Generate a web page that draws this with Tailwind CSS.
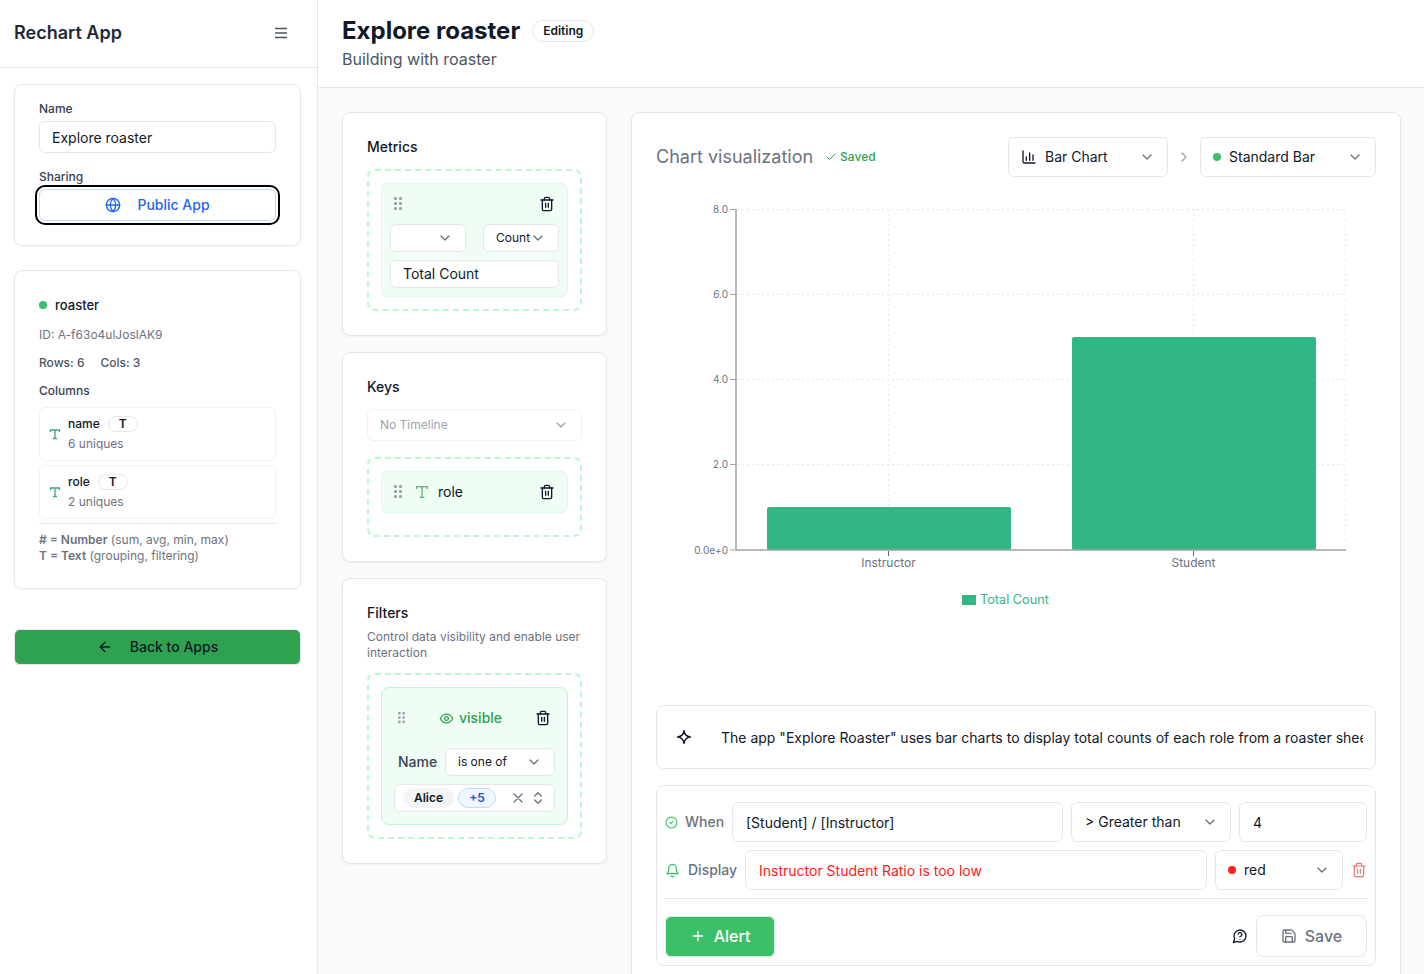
<!DOCTYPE html>
<html lang="en">
<head>
    <meta charset="utf-8">
    <script src="https://cdn.jsdelivr.net/npm/@tailwindcss/browser@4"></script>
</head>
<body class="font-[Inter,sans-serif] text-[#111827] bg-white">
<div class="h-[974px] w-[1424px] overflow-hidden flex">
    <!-- sidebar -->
    <aside class="w-[318px] shrink-0 border-r border-[#e5e7eb] bg-white">
        <div class="h-[68px] border-b border-[#e5e7eb] pl-[14px] pr-[28px] pb-[2px] flex items-center justify-between">
            <span class="text-[18px] font-semibold text-[#1f2937]">Rechart App</span>
            <svg class="w-4 h-4 text-[#4b5563]" viewBox="0 0 16 16" fill="none" stroke="currentColor" stroke-width="1.6"><path d="M2 3.500h12M2 8h12M2 12.500h12"/></svg>
        </div>
        <div class="pl-[14px] pr-[16px] pt-[16px]">
            <div class="h-[162px] rounded-lg border border-[#e5e7eb] shadow-xs px-6 pt-[16px]">
                <div class="text-xs leading-4 font-medium text-[#374151]">Name</div>
                <div class="mt-[4px] h-8 border border-[#e5e7eb] rounded-md pl-3 pt-px flex items-center text-sm text-[#111827]">Explore roaster</div>
                <div class="mt-[16px] text-xs leading-4 font-medium text-[#374151]">Sharing</div>
                <div class="mt-[4px] h-8 rounded-md border border-[#bfdbfe] outline-2 outline-offset-2 outline-black flex items-center justify-center gap-[16px] text-sm font-medium text-[#2563eb]">
                    <svg class="w-4 h-4" viewBox="0 0 24 24" fill="none" stroke="currentColor" stroke-width="2" stroke-linecap="round" stroke-linejoin="round"><circle cx="12" cy="12" r="10"/><path d="M12 2a14.500 14.500 0 0 0 0 20 14.500 14.500 0 0 0 0-20"/><path d="M2 12h20"/></svg>
                    <span>Public App</span>
                </div>
            </div>
            <div class="mt-6 h-[319px] rounded-lg border border-[#e5e7eb] shadow-xs px-6 pt-[26px]">
                <div class="flex items-center gap-2 text-[13px] leading-4 font-medium text-[#111827]">
                    <span class="w-2 h-2 rounded-full bg-[#3bbf67]"></span>roaster
                </div>
                <div class="mt-[14px] text-xs leading-[16px] text-[#6b7280]">ID: A-f63o4ulJoslAK9</div>
                <div class="mt-[12px] text-xs leading-[16px] font-medium text-[#4b5563] flex gap-4"><span>Rows: 6</span><span>Cols: 3</span></div>
                <div class="mt-[12px] text-xs leading-[16px] font-medium text-[#374151]">Columns</div>
                <div class="mt-[8px] flex flex-col gap-[4px]">
                    <div class="h-[54px] rounded-md border border-[#f0f1f3] flex items-center pl-[9px] gap-[7px]">
                        <svg class="w-[12px] h-[12px] text-[#3fa878]" viewBox="0 0 24 24" fill="none" stroke="currentColor" stroke-width="2.600"><path d="M3 8V4h18v4M12 4v17M8 21h8"/></svg>
                        <div>
                            <div class="flex items-center gap-2 text-xs leading-4 font-medium text-[#111827]">name<span class="w-[30px] h-4 rounded-full border border-[#e5e7eb] flex items-center justify-center font-semibold">T</span></div>
                            <div class="mt-[4px] text-xs leading-4 text-[#6b7280]">6 uniques</div>
                        </div>
                    </div>
                    <div class="h-[54px] rounded-md border border-[#f0f1f3] flex items-center pl-[9px] gap-[7px]">
                        <svg class="w-[12px] h-[12px] text-[#3fa878]" viewBox="0 0 24 24" fill="none" stroke="currentColor" stroke-width="2.600"><path d="M3 8V4h18v4M12 4v17M8 21h8"/></svg>
                        <div>
                            <div class="flex items-center gap-2 text-xs leading-4 font-medium text-[#111827]">role<span class="w-[30px] h-4 rounded-full border border-[#e5e7eb] flex items-center justify-center font-semibold">T</span></div>
                            <div class="mt-[4px] text-xs leading-4 text-[#6b7280]">2 uniques</div>
                        </div>
                    </div>
                </div>
                <div class="mt-[4px] border-t border-[#e5e7eb] pt-[8px] text-xs leading-[16px] text-[#6b7280]">
                    <div><b class="font-semibold"># = Number</b> (sum, avg, min, max)</div>
                    <div><b class="font-semibold">T = Text</b> (grouping, filtering)</div>
                </div>
            </div>
            <div class="mt-[40px] h-[36px] rounded-md bg-[#2ea24f] border border-[#e5e7eb] flex items-center justify-center gap-[17px] text-sm font-medium text-[#111827]">
                <svg class="w-4 h-4" viewBox="0 0 24 24" fill="none" stroke="currentColor" stroke-width="2" stroke-linecap="round" stroke-linejoin="round"><path d="m12 19-7-7 7-7"/><path d="M19 12H5"/></svg>
                <span>Back to Apps</span>
            </div>
        </div>
    </aside>

    <main class="flex-1 min-w-0 bg-[#f9fafb]">
        <header class="h-[88px] bg-white border-b border-[#e5e7eb] pl-6 pt-[15px]">
            <div class="flex items-center gap-3">
                <h1 class="text-2xl leading-8 font-bold text-[#111827]">Explore roaster</h1>
                <span class="h-[22px] px-[10px] rounded-full border border-[#e5e7eb] flex items-center text-xs font-semibold text-[#111827]">Editing</span>
            </div>
            <div class="text-base leading-6 text-[#4b5563]">Building with roaster</div>
        </header>

        <div class="flex gap-6 pl-6 pt-6">
            <div class="w-[265px] shrink-0 flex flex-col gap-4">
                <!-- metrics -->
                <section class="h-[224px] bg-white rounded-lg border border-[#e5e7eb] shadow-xs pl-6 pr-6 pt-[26px]">
                    <h3 class="text-sm leading-4 font-medium text-[#111827]">Metrics</h3>
                    <div class="mt-[14px] h-[142px] rounded-lg border-2 border-dashed border-[#bbf7d0] p-[12px]">
                        <div class="h-[114px] rounded-md bg-[#f0fdf4] border border-[#dcfce7] pl-2 pr-2 pt-[12px]">
                            <div class="flex items-center justify-between pl-[4px] pr-[4px]">
                                <svg class="w-[8px] h-[14px] text-[#9ca3af]" viewBox="0 0 8 14" fill="currentColor"><rect x="0" y="0" width="3" height="3" rx="1"/><rect x="5" y="0" width="3" height="3" rx="1"/><rect x="0" y="5" width="3" height="3" rx="1"/><rect x="5" y="5" width="3" height="3" rx="1"/><rect x="0" y="10" width="3" height="3" rx="1"/><rect x="5" y="10" width="3" height="3" rx="1"/></svg>
                                <svg class="w-4 h-4 text-[#111827]" viewBox="0 0 24 24" fill="none" stroke="currentColor" stroke-width="2" stroke-linecap="round" stroke-linejoin="round"><path d="M3 6h18"/><path d="M19 6v14c0 1-1 2-2 2H7c-1 0-2-1-2-2V6"/><path d="M8 6V4c0-1 1-2 2-2h4c1 0 2 1 2 2v2"/><path d="M10 11v6M14 11v6"/></svg>
                            </div>
                            <div class="mt-[12px] flex justify-between">
                                <div class="w-[76px] h-[28px] bg-white rounded-md border border-[#e5e7eb] flex items-center justify-end pr-[12px]">
                                    <svg class="w-4 h-4 text-[#6b7280]" viewBox="0 0 24 24" fill="none" stroke="currentColor" stroke-width="2" stroke-linecap="round" stroke-linejoin="round"><path d="m6 9 6 6 6-6"/></svg>
                                </div>
                                <div class="w-[76px] h-[28px] bg-white rounded-md border border-[#e5e7eb] flex items-center pl-[12px] text-xs text-[#111827]">Count
                                    <svg class="w-4 h-4 text-[#6b7280]" viewBox="0 0 24 24" fill="none" stroke="currentColor" stroke-width="2" stroke-linecap="round" stroke-linejoin="round"><path d="m6 9 6 6 6-6"/></svg>
                                </div>
                            </div>
                            <div class="mt-[8px] h-[28px] bg-white rounded-md border border-[#e5e7eb] pl-3 flex items-center text-sm text-[#111827]">Total Count</div>
                        </div>
                    </div>
                </section>

                <!-- keys -->
                <section class="h-[210px] bg-white rounded-lg border border-[#e5e7eb] shadow-xs px-6 pt-[26px]">
                    <h3 class="text-sm leading-4 font-medium text-[#111827]">Keys</h3>
                    <div class="mt-[14px] h-8 rounded-md border border-[#f0f1f3] pl-3 pr-[12px] flex items-center justify-between text-xs text-[#9ca3af]">No Timeline
                        <svg class="w-4 h-4 text-[#9ca3af]" viewBox="0 0 24 24" fill="none" stroke="currentColor" stroke-width="2" stroke-linecap="round" stroke-linejoin="round"><path d="m6 9 6 6 6-6"/></svg>
                    </div>
                    <div class="mt-4 h-[80px] rounded-lg border-2 border-dashed border-[#bbf7d0] p-[12px]">
                        <div class="h-[42px] rounded-md bg-[#f0fdf4] border border-[#dcfce7] pl-[12px] pr-[12px] flex items-center">
                            <svg class="w-[8px] h-[14px] text-[#9ca3af]" viewBox="0 0 8 14" fill="currentColor"><rect x="0" y="0" width="3" height="3" rx="1"/><rect x="5" y="0" width="3" height="3" rx="1"/><rect x="0" y="5" width="3" height="3" rx="1"/><rect x="5" y="5" width="3" height="3" rx="1"/><rect x="0" y="10" width="3" height="3" rx="1"/><rect x="5" y="10" width="3" height="3" rx="1"/></svg>
                            <svg class="ml-[13px] w-[14px] h-[14px] text-[#2ea24f]" viewBox="0 0 24 24" fill="none" stroke="currentColor" stroke-width="1.800"><path d="M3 7V3h18v4M12 3v18M8 21h8"/></svg>
                            <span class="ml-[9px] text-sm text-[#111827]">role</span>
                            <svg class="ml-auto w-4 h-4 text-[#111827]" viewBox="0 0 24 24" fill="none" stroke="currentColor" stroke-width="2" stroke-linecap="round" stroke-linejoin="round"><path d="M3 6h18"/><path d="M19 6v14c0 1-1 2-2 2H7c-1 0-2-1-2-2V6"/><path d="M8 6V4c0-1 1-2 2-2h4c1 0 2 1 2 2v2"/><path d="M10 11v6M14 11v6"/></svg>
                        </div>
                    </div>
                </section>

                <!-- filters -->
                <section class="h-[286px] bg-white rounded-lg border border-[#e5e7eb] shadow-xs px-6 pt-[26px]">
                    <h3 class="text-sm leading-4 font-medium text-[#111827]">Filters</h3>
                    <p class="mt-[8px] text-xs leading-4 text-[#6b7280]">Control data visibility and enable user interaction</p>
                    <div class="mt-[12px] h-[166px] rounded-lg border-2 border-dashed border-[#bbf7d0] p-[12px]">
                        <div class="h-[138px] rounded-lg bg-[#f0fdf4] border border-[#bbf7d0] pl-[12px] pr-[12px] pt-[22px]">
                            <div class="flex items-center h-4 pl-[4px] pr-[4px]">
                                <svg class="w-[7px] h-[12px] text-[#9ca3af]" viewBox="0 0 8 14" fill="currentColor"><rect x="0" y="0" width="3" height="3" rx="1"/><rect x="5" y="0" width="3" height="3" rx="1"/><rect x="0" y="5" width="3" height="3" rx="1"/><rect x="5" y="5" width="3" height="3" rx="1"/><rect x="0" y="10" width="3" height="3" rx="1"/><rect x="5" y="10" width="3" height="3" rx="1"/></svg>
                                <svg class="ml-[34px] w-[15px] h-[15px] text-[#2ea24f]" viewBox="0 0 24 24" fill="none" stroke="currentColor" stroke-width="2" stroke-linecap="round" stroke-linejoin="round"><path d="M2 12s3.500-7 10-7 10 7 10 7-3.500 7-10 7-10-7-10-7"/><circle cx="12" cy="12" r="3"/></svg>
                                <span class="ml-[5px] text-sm font-medium text-[#2ea24f]">visible</span>
                                <svg class="ml-auto w-4 h-4 text-[#111827]" viewBox="0 0 24 24" fill="none" stroke="currentColor" stroke-width="2" stroke-linecap="round" stroke-linejoin="round"><path d="M3 6h18"/><path d="M19 6v14c0 1-1 2-2 2H7c-1 0-2-1-2-2V6"/><path d="M8 6V4c0-1 1-2 2-2h4c1 0 2 1 2 2v2"/><path d="M10 11v6M14 11v6"/></svg>
                            </div>
                            <div class="mt-[22px] flex items-center pl-[4px]">
                                <span class="w-[47px] text-sm font-medium text-[#374151]">Name</span>
                                <div class="flex-1 h-[28px] bg-white rounded-md border border-[#e5e7eb] pl-3 pr-[12px] flex items-center justify-between text-xs text-[#111827]">is one of
                                    <svg class="w-4 h-4 text-[#6b7280]" viewBox="0 0 24 24" fill="none" stroke="currentColor" stroke-width="2" stroke-linecap="round" stroke-linejoin="round"><path d="m6 9 6 6 6-6"/></svg>
                                </div>
                            </div>
                            <div class="mt-[8px] h-[28px] bg-white rounded-md border border-[#e5e7eb] pl-[8px] pr-[8px] flex items-center">
                                <span class="w-[51px] h-[20px] rounded-full bg-[#f3f4f6] flex items-center justify-center text-xs font-semibold text-[#111827]">Alice</span>
                                <span class="ml-[4px] w-[38px] h-[20px] rounded-full bg-[#eff6ff] border border-[#bfdbfe] flex items-center justify-center text-xs font-semibold text-[#1d4ed8]">+5</span>
                                <svg class="ml-auto w-4 h-4 text-[#6b7280]" viewBox="0 0 24 24" fill="none" stroke="currentColor" stroke-width="2" stroke-linecap="round" stroke-linejoin="round"><path d="M18 6 6 18M6 6l12 12"/></svg>
                                <svg class="ml-[4px] w-4 h-4 text-[#6b7280]" viewBox="0 0 24 24" fill="none" stroke="currentColor" stroke-width="2" stroke-linecap="round" stroke-linejoin="round"><path d="m7 15 5 5 5-5M7 9l5-5 5 5"/></svg>
                            </div>
                        </div>
                    </div>
                </section>
            </div>

            <!-- chart card -->
            <section class="w-[770px] shrink-0 h-[900px] bg-white rounded-lg border border-[#e5e7eb] shadow-xs px-6 pt-6">
                <div class="flex items-center h-10">
                    <h2 class="text-lg font-normal text-[#6b7280]">Chart visualization</h2>
                    <svg class="ml-[12px] w-[12px] h-[12px] text-[#2ea24f]" viewBox="0 0 24 24" fill="none" stroke="currentColor" stroke-width="2" stroke-linecap="round" stroke-linejoin="round"><path d="M20 6 9 17l-5-5"/></svg>
                    <span class="ml-[3px] text-xs font-medium text-[#2ea24f]">Saved</span>
                    <div class="ml-auto w-[160px] h-10 rounded-md border border-[#e5e7eb] pl-3 pr-[12px] flex items-center text-sm text-[#111827]">
                        <svg class="w-4 h-4 text-[#111827]" viewBox="0 0 24 24" fill="none" stroke="currentColor" stroke-width="2" stroke-linecap="round" stroke-linejoin="round"><path d="M3 3v16a2 2 0 0 0 2 2h16"/><path d="M8 17v-5M13 17V6M18 17v-8"/></svg>
                        <span class="ml-2">Bar Chart</span>
                        <svg class="ml-auto w-4 h-4 text-[#6b7280]" viewBox="0 0 24 24" fill="none" stroke="currentColor" stroke-width="2" stroke-linecap="round" stroke-linejoin="round"><path d="m6 9 6 6 6-6"/></svg>
                    </div>
                    <svg class="mx-[8px] w-4 h-4 text-[#9ca3af]" viewBox="0 0 24 24" fill="none" stroke="currentColor" stroke-width="2" stroke-linecap="round" stroke-linejoin="round"><path d="m9 18 6-6-6-6"/></svg>
                    <div class="w-[176px] h-10 rounded-md border border-[#e5e7eb] pl-3 pr-[12px] flex items-center text-sm text-[#111827]">
                        <span class="w-2 h-2 rounded-full bg-[#3bbf67]"></span>
                        <span class="ml-2">Standard Bar</span>
                        <svg class="ml-auto w-4 h-4 text-[#6b7280]" viewBox="0 0 24 24" fill="none" stroke="currentColor" stroke-width="2" stroke-linecap="round" stroke-linejoin="round"><path d="m6 9 6 6 6-6"/></svg>
                    </div>
                </div>

                <!-- svg origin = page (656,177) -->
                <svg class="block" width="720" height="528" viewBox="656 177 720 528" font-family="Inter, sans-serif">
                    <g stroke="#e5e7eb" stroke-dasharray="2 3" fill="none">
                        <path d="M737 209.500H1346M737 294.500H1346M737 379.500H1346M737 464.500H1346"/>
                        <path d="M888.500 209V550M1193.500 209V550M1345.500 209V550"/>
                    </g>
                    <rect x="767" y="507" width="244" height="43" rx="2" fill="#32b784"/>
                    <rect x="1072" y="337" width="244" height="213" rx="2" fill="#32b784"/>
                    <g stroke="#a3a3a3" fill="none">
                        <path d="M736 209V550.500M736 550H1346" stroke-width="1.500"/>
                        <path d="M730 209.500H736M730 294.500H736M730 379.500H736M730 464.500H736M730 550H736"/>
                    </g>
                    <path d="M888.500 551V556M1193.500 551V556" stroke="#666"/>
                    <g font-size="10" fill="#6b7280" text-anchor="end">
                        <text x="728" y="213">8.0</text>
                        <text x="728" y="298">6.0</text>
                        <text x="728" y="383">4.0</text>
                        <text x="728" y="468">2.0</text>
                        <text x="728" y="554">0.0e+0</text>
                    </g>
                    <g font-size="12" fill="#6b7280" text-anchor="middle">
                        <text x="888.500" y="567">Instructor</text>
                        <text x="1193.500" y="567">Student</text>
                    </g>
                    <rect x="962" y="595" width="14" height="10" fill="#32b784"/>
                    <text x="980" y="604" font-size="12.700" fill="#32b784">Total Count</text>
                </svg>

                <div class="h-16 rounded-lg border border-[#e5e7eb] pl-[19px] pr-[12px] flex items-center">
                    <svg class="w-4 h-4 shrink-0 text-[#111827]" viewBox="0 0 24 24" fill="none" stroke="currentColor" stroke-width="2.200" stroke-linejoin="round"><path d="M12 2.500c.7 5.500 4 8.800 9.500 9.500-5.500.7-8.800 4-9.500 9.500-.7-5.500-4-8.800-9.500-9.500 5.500-.7 8.800-4 9.500-9.500z"/></svg>
                    <div class="ml-[29px] pt-px flex-1 min-w-0 overflow-hidden whitespace-nowrap text-sm text-[#111827]">The app "Explore Roaster" uses bar charts to display total counts of each role from a roaster sheet.</div>
                </div>

                <div class="mt-4 h-[181px] rounded-lg border border-[#e5e7eb] px-[8px] pt-[16px]">
                    <div class="flex items-center h-10">
                        <svg class="w-[13px] h-[13px] text-[#3bbf67]" viewBox="0 0 24 24" fill="none" stroke="currentColor" stroke-width="2" stroke-linecap="round" stroke-linejoin="round"><circle cx="12" cy="12" r="10"/><path d="m9 12 2 2 4-4"/></svg>
                        <span class="ml-[7px] text-sm font-medium text-[#6b7280]">When</span>
                        <div class="ml-auto w-[331px] h-10 rounded-md border border-[#e5e7eb] pl-[13px] pt-px flex items-center text-sm text-[#111827]">[Student] / [Instructor]</div>
                        <div class="ml-2 w-[160px] h-10 rounded-md border border-[#e5e7eb] pl-[13px] pr-[12px] flex items-center justify-between text-sm text-[#111827]">&gt; Greater than
                            <svg class="w-4 h-4 text-[#6b7280]" viewBox="0 0 24 24" fill="none" stroke="currentColor" stroke-width="2" stroke-linecap="round" stroke-linejoin="round"><path d="m6 9 6 6 6-6"/></svg>
                        </div>
                        <div class="ml-2 w-[128px] h-10 rounded-md border border-[#e5e7eb] pl-[13px] pt-px flex items-center text-sm text-[#111827]">4</div>
                    </div>
                    <div class="mt-2 flex items-center h-10">
                        <svg class="w-[15px] h-[15px] text-[#3bbf67]" viewBox="0 0 24 24" fill="none" stroke="currentColor" stroke-width="2" stroke-linecap="round" stroke-linejoin="round"><path d="M6 8a6 6 0 0 1 12 0c0 7 3 9 3 9H3s3-2 3-9"/><path d="M10.300 21a1.940 1.940 0 0 0 3.400 0"/></svg>
                        <span class="ml-[8px] text-sm font-medium text-[#6b7280]">Display</span>
                        <div class="ml-auto w-[462px] h-10 rounded-md border border-[#e5e7eb] pl-[13px] pt-px flex items-center text-sm text-[#ff2020]">Instructor Student Ratio is too low</div>
                        <div class="ml-2 w-[128px] h-10 rounded-md border border-[#e5e7eb] pl-[12px] pr-[12px] flex items-center text-sm text-[#111827]">
                            <span class="w-2 h-2 rounded-full bg-[#ff2020]"></span>
                            <span class="ml-2">red</span>
                            <svg class="ml-auto w-4 h-4 text-[#6b7280]" viewBox="0 0 24 24" fill="none" stroke="currentColor" stroke-width="2" stroke-linecap="round" stroke-linejoin="round"><path d="m6 9 6 6 6-6"/></svg>
                        </div>
                        <svg class="ml-2 w-4 h-4 text-[#f87171]" viewBox="0 0 24 24" fill="none" stroke="currentColor" stroke-width="1.800" stroke-linecap="round" stroke-linejoin="round"><path d="M3 6h18"/><path d="M19 6v14c0 1-1 2-2 2H7c-1 0-2-1-2-2V6"/><path d="M8 6V4c0-1 1-2 2-2h4c1 0 2 1 2 2v2"/><path d="M10 11v6M14 11v6"/></svg>
                    </div>
                    <div class="mt-2 border-t border-[#e5e7eb] pt-[16px] flex items-center">
                        <div class="w-[110px] h-[41px] rounded-md bg-[#3bbf67] border border-[#d9f3e1] flex items-center justify-center gap-[8px] text-base font-medium text-white">
                            <svg class="w-4 h-4" viewBox="0 0 24 24" fill="none" stroke="currentColor" stroke-width="2" stroke-linecap="round" stroke-linejoin="round"><path d="M5 12h14M12 5v14"/></svg>
                            <span>Alert</span>
                        </div>
                        <svg class="ml-auto w-[16px] h-[16px] text-[#111827]" viewBox="0 0 24 24" fill="none" stroke="currentColor" stroke-width="2" stroke-linecap="round" stroke-linejoin="round"><path d="M7.900 20A9 9 0 1 0 4 16.100L2 22Z"/><path d="M9.090 9a3 3 0 0 1 5.830 1c0 2-3 3-3 3"/><path d="M12 17h.01"/></svg>
                        <div class="ml-[8px] w-[111px] h-[42px] rounded-lg border border-[#e5e7eb] flex items-center justify-center gap-[8px] text-base font-medium text-[#6b7280]">
                            <svg class="w-4 h-4" viewBox="0 0 24 24" fill="none" stroke="currentColor" stroke-width="2" stroke-linecap="round" stroke-linejoin="round"><path d="M15.200 3a2 2 0 0 1 1.400.6l3.800 3.800a2 2 0 0 1 .6 1.400V19a2 2 0 0 1-2 2H5a2 2 0 0 1-2-2V5a2 2 0 0 1 2-2z"/><path d="M17 21v-7a1 1 0 0 0-1-1H8a1 1 0 0 0-1 1v7"/><path d="M7 3v4a1 1 0 0 0 1 1h7"/></svg>
                            <span>Save</span>
                        </div>
                    </div>
                </div>
            </section>
        </div>
    </main>
</div>
</body>
</html>
